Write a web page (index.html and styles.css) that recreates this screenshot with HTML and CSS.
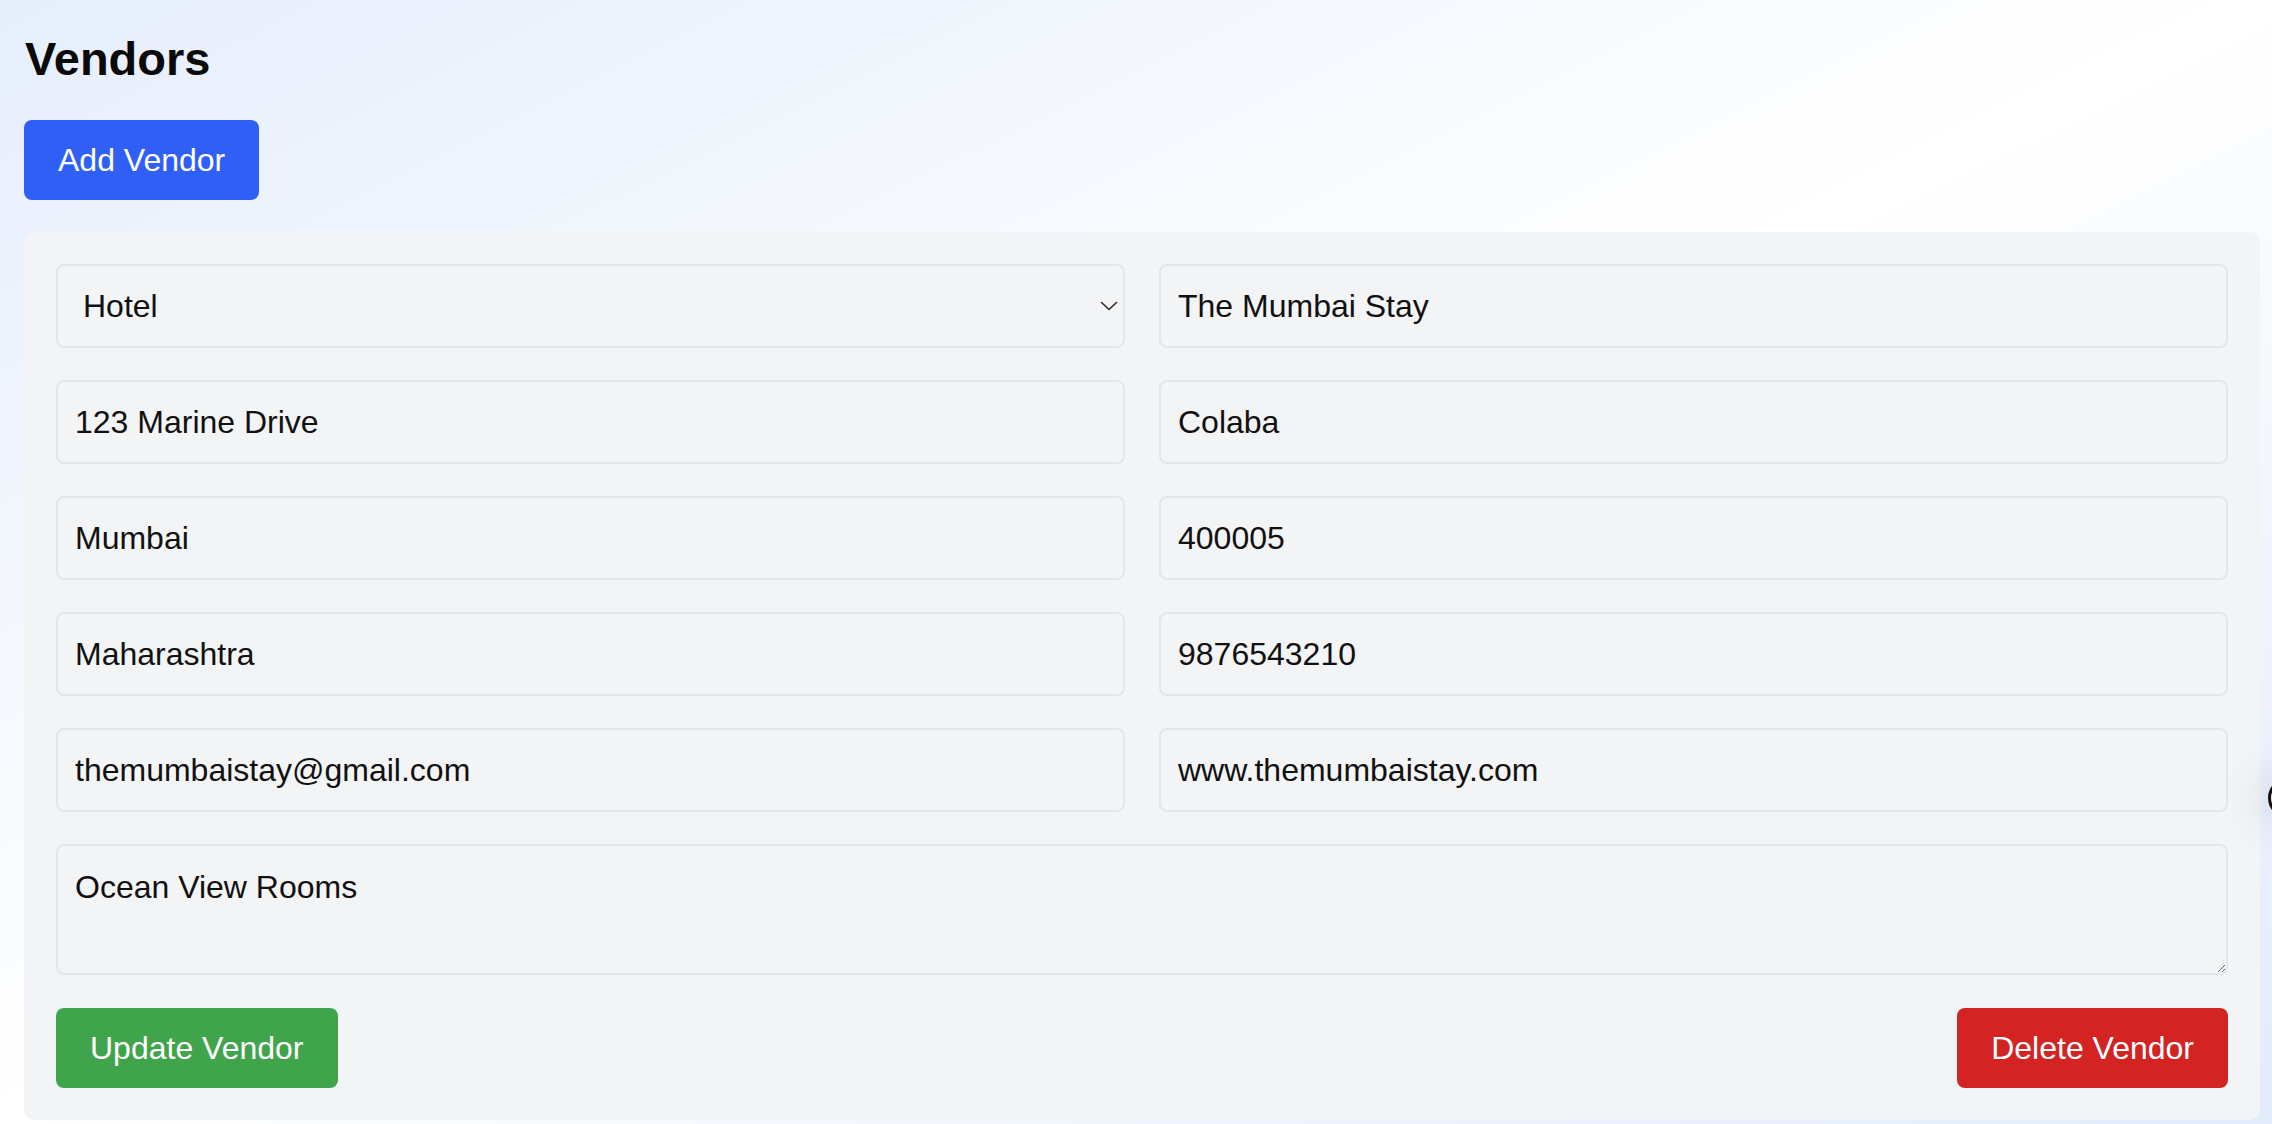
FILE: index.html
```html
<!DOCTYPE html>
<html lang="en">
<head>
<meta charset="utf-8">
<title>Vendors</title>
<link rel="stylesheet" href="styles.css">
</head>
<body>
<main class="page">
  <h1 class="title">Vendors</h1>
  <button class="btn btn-blue add-btn" type="button">Add Vendor</button>
  <form class="card">
    <div class="grid">
      <div class="select-wrap">
        <select class="field select">
          <option>Hotel</option>
          <option>Restaurant</option>
          <option>Transport</option>
        </select>
        <svg class="chevron" width="18" height="10" viewBox="0 0 18 10" aria-hidden="true"><path d="M1.5 1.5l7.5 7 7.5-7" fill="none" stroke="#2a2a2a" stroke-width="1.6" stroke-linecap="round" stroke-linejoin="round"/></svg>
      </div>
      <input class="field" type="text" value="The Mumbai Stay">
      <input class="field" type="text" value="123 Marine Drive">
      <input class="field" type="text" value="Colaba">
      <input class="field" type="text" value="Mumbai">
      <input class="field" type="text" value="400005">
      <input class="field" type="text" value="Maharashtra">
      <input class="field" type="text" value="9876543210">
      <input class="field" type="text" value="themumbaistay@gmail.com">
      <input class="field" type="text" value="www.themumbaistay.com">
      <textarea class="field area">Ocean View Rooms</textarea>
    </div>
    <div class="actions">
      <button class="btn btn-green" type="button">Update Vendor</button>
      <button class="btn btn-red" type="button">Delete Vendor</button>
    </div>
  </form>
</main>
<div class="fab"></div>
</body>
</html>
```
FILE: styles.css
```css
* {
  box-sizing: border-box;
}

html, body {
  margin: 0;
  height: 100%;
}

body {
  overflow: hidden;
  font-family: "Liberation Sans", Arial, sans-serif;
  color: #111111;
  background: linear-gradient(to bottom right, #e6eefc 0%, #ffffff 50%, #e2ebfb 100%);
}

.page {
  padding: 27px 12px 0 24px;
  display: flex;
  flex-direction: column;
  align-items: flex-start;
}

.title {
  margin: 0 0 29px 1px;
  font-size: 47px;
  line-height: 64px;
  font-weight: 700;
  color: #0a0a0a;
}

.btn {
  border: none;
  border-radius: 8px;
  height: 80px;
  padding: 0 34px;
  font-family: "Liberation Sans", Arial, sans-serif;
  font-size: 32px;
  line-height: 48px;
  color: #ffffff;
  cursor: pointer;
}

.btn-blue { background: #2f5ff5; }
.btn-green { background: #40a44c; }
.btn-red { background: #d32323; }

.add-btn {
  margin-bottom: 32px;
}

.card {
  align-self: stretch;
  background: #f3f4f6;
  border-radius: 10px;
  padding: 32px;
}

.grid {
  display: grid;
  grid-template-columns: 1fr 1fr;
  column-gap: 34px;
  row-gap: 32px;
}

.field {
  width: 100%;
  height: 84px;
  margin: 0;
  border: 2px solid #e3e5e9;
  border-radius: 8px;
  background: #f3f4f6;
  padding: 0 17px;
  font-family: "Liberation Sans", Arial, sans-serif;
  font-size: 32px;
  color: #111111;
  outline: none;
}

.select-wrap {
  position: relative;
}

.select {
  appearance: none;
  -webkit-appearance: none;
  padding-left: 25px;
}

.chevron {
  position: absolute;
  right: 7px;
  top: 37px;
  pointer-events: none;
}

.area {
  grid-column: 1 / -1;
  height: 131px;
  padding: 17px;
  line-height: 48px;
  resize: vertical;
}

.actions {
  margin-top: 33px;
  display: flex;
  justify-content: space-between;
}

.fab {
  position: fixed;
  right: -36px;
  top: 778px;
  width: 40px;
  height: 40px;
  border-radius: 50%;
  border: 3px solid #111111;
  background: #eeeeee;
  box-shadow: 0 0 40px 12px rgba(0, 0, 0, 0.08);
}
```
